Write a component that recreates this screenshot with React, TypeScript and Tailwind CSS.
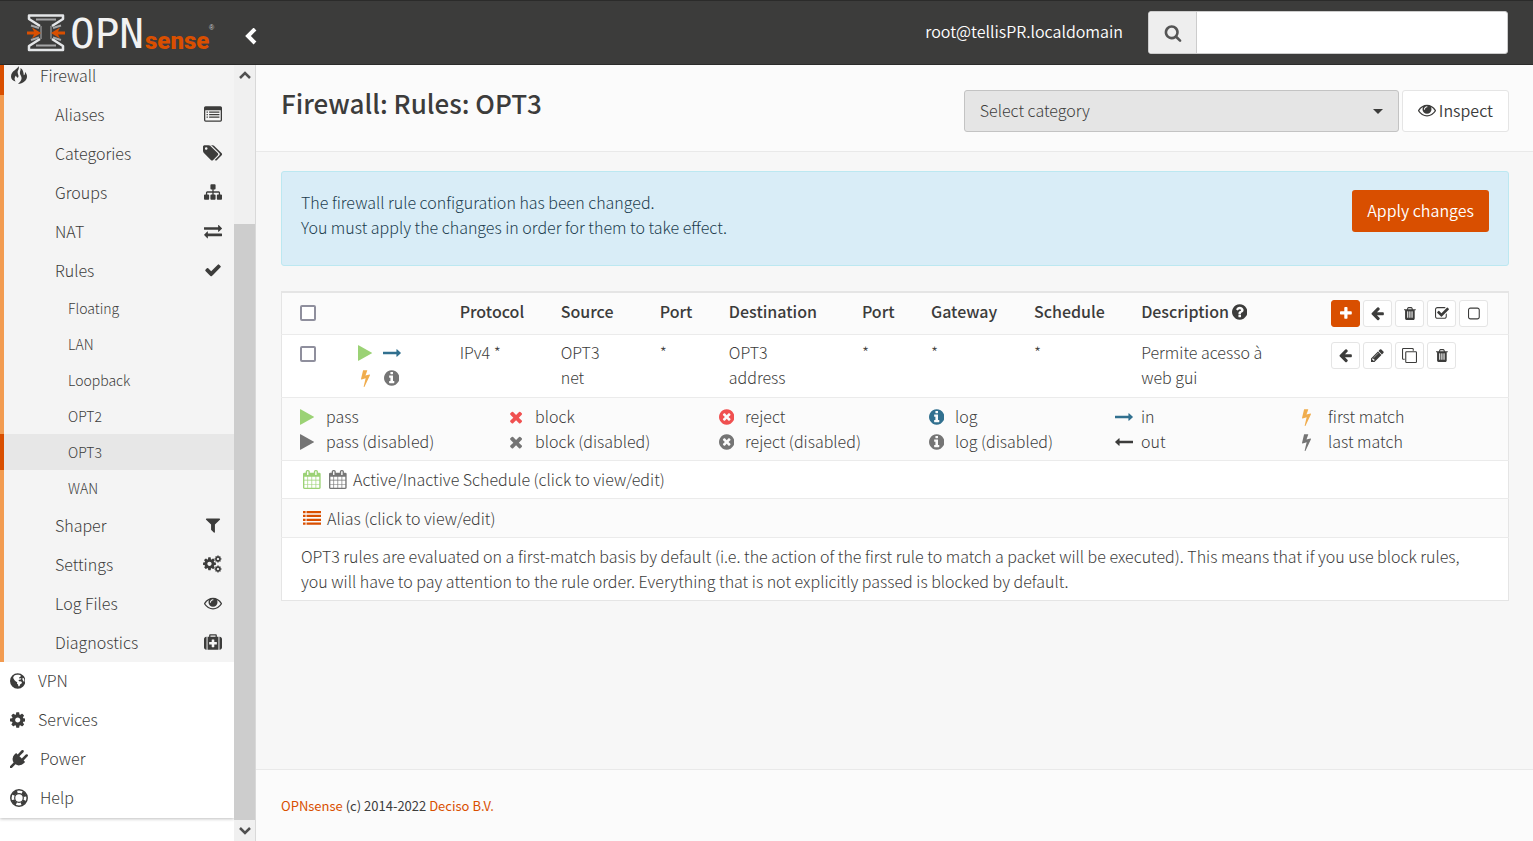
import type { ReactNode } from "react"
import clsx from "clsx"

const disc = "q0 209-103 385.5t-279.5 279.5-385.5 103-385.5-103-279.5-279.5-103-385.5 103-385.5 279.5-279.5 385.5-103 385.5 103 279.5 279.5 103 385.5z"
const cog = "M1152 896q0-106-75-181t-181-75-181 75-75 181 75 181 181 75 181-75 75-181zm512-109v222q0 12-8 23t-20 13l-185 28q-19 54-39 91 35 50 107 138 10 12 10 25t-9 23q-27 37-99 108t-94 71q-12 0-26-9l-138-108q-44 23-91 38-16 136-29 186-7 28-36 28h-222q-14 0-24.5-8.5t-11.5-21.5l-28-184q-49-16-90-37l-141 107q-10 9-25 9-14 0-25-11-126-114-165-168-7-10-7-23 0-12 8-23 15-21 51-66.5t54-70.5q-27-50-41-99l-183-27q-13-2-21-12.5t-8-23.5v-222q0-12 8-23t19-13l186-28q14-46 39-92-40-57-107-138-10-12-10-24 0-10 9-23 26-36 98.5-107.5t94.5-71.5q13 0 26 10l138 107q44-23 91-38 16-136 29-186 7-28 36-28h222q14 0 24.5 8.5t11.5 21.5l28 184q49 16 90 37l142-107q9-9 24-9 13 0 25 10 129 119 165 170 7 8 7 22 0 12-8 23-15 21-51 66.5t-54 70.5q26 50 41 98l183 28q13 2 21 12.5t8 23.5z"

// [viewBox, path]
const icons = {
  check: ["0 0 1792 1792", "M1671 566q0 40-28 68l-724 724-136 136q-28 28-68 28t-68-28l-136-136-362-362q-28-28-28-68t28-68l136-136q28-28 68-28t68 28l294 295 656-657q28-28 68-28t68 28l136 136q28 28 28 68z"],
  plus: ["192 0 1408 1792", "M1600 736v192q0 40-28 68t-68 28h-416v416q0 40-28 68t-68 28h-192q-40 0-68-28t-28-68v-416h-416q-40 0-68-28t-28-68v-192q0-40 28-68t68-28h416v-416q0-40 28-68t68-28h192q40 0 68 28t28 68v416h416q40 0 68 28t28 68z"],
  times: ["192 0 1408 1792", "M1490 1322q0 40-28 68l-136 136q-28 28-68 28t-68-28l-294-294-294 294q-28 28-68 28t-68-28l-136-136q-28-28-28-68t28-68l294-294-294-294q-28-28-28-68t28-68l136-136q28-28 68-28t68 28l294 294 294-294q28-28 68-28t68 28l136 136q28 28 28 68t-28 68l-294 294 294 294q28 28 28 68z"],
  timesCircle: ["128 0 1536 1792", "M1277 1122q0-26-19-45l-181-181 181-181q19-19 19-45 0-27-19-46l-90-90q-19-19-46-19-26 0-45 19l-181 181-181-181q-19-19-45-19-27 0-46 19l-90 90q-19 19-19 46 0 26 19 45l181 181-181 181q-19 19-19 45 0 27 19 46l90 90q19 19 46 19 26 0 45-19l181-181 181 181q19 19 45 19 27 0 46-19l90-90q19-19 19-46zm387-226" + disc],
  info: ["128 0 1536 1792", "M1152 1376v-160q0-14-9-23t-23-9h-96v-512q0-14-9-23t-23-9h-320q-14 0-23 9t-9 23v160q0 14 9 23t23 9h96v320h-96q-14 0-23 9t-9 23v160q0 14 9 23t23 9h448q14 0 23-9t9-23zm-128-896v-160q0-14-9-23t-23-9h-192q-14 0-23 9t-9 23v160q0 14 9 23t23 9h192q14 0 23-9t9-23zm640 416" + disc],
  question: ["128 0 1536 1792", "M1024 1376v-192q0-14-9-23t-23-9h-192q-14 0-23 9t-9 23v192q0 14 9 23t23 9h192q14 0 23-9t9-23zm256-672q0-88-55.5-163t-138.5-116-170-41q-243 0-371 213-15 24 8 42l132 100q7 6 19 6 16 0 25-12 53-68 86-92 34-24 86-24 48 0 85.5 26t37.5 59q0 38-20 61t-68 45q-63 28-115.5 86.5t-52.5 125.5v36q0 14 9 23t23 9h192q14 0 23-9t9-23q0-19 21.5-49.5t54.5-49.5q32-18 49-28.5t46-35 44.5-48 28-60.5 12.5-81zm384 192" + disc],
  trash: ["192 0 1408 1792", "M704 1376v-704q0-14-9-23t-23-9h-64q-14 0-23 9t-9 23v704q0 14 9 23t23 9h64q14 0 23-9t9-23zm256 0v-704q0-14-9-23t-23-9h-64q-14 0-23 9t-9 23v704q0 14 9 23t23 9h64q14 0 23-9t9-23zm256 0v-704q0-14-9-23t-23-9h-64q-14 0-23 9t-9 23v704q0 14 9 23t23 9h64q14 0 23-9t9-23zm-544-992h448l-48-117q-7-9-17-11h-317q-10 2-17 11zm928 32v64q0 14-9 23t-23 9h-96v948q0 83-47 143.5t-113 60.5h-832q-66 0-113-58.5t-47-141.5v-952h-96q-14 0-23-9t-9-23v-64q0-14 9-23t23-9h309l70-167q15-37 54-63t79-26h320q40 0 79 26t54 63l70 167h309q14 0 23 9t9 23z"],
  play: ["192 0 1408 1792", "M1576 927l-1328 738q-23 13-39.5 3t-16.5-36v-1472q0-26 16.5-36t39.5 3l1328 738q23 13 23 31t-23 31z"],
  filter: ["0 0 1792 1792", "M1595 295q17 41-14 70l-493 493v742q0 42-39 59-13 5-25 5-27 0-45-19l-256-256q-19-19-19-45v-486l-493-493q-31-29-14-70 17-39 59-39h1280q42 0 59 39z"],
  exchange: ["0 0 1792 1792", "M1792 1184v192q0 13-9.5 22.5t-22.5 9.5h-1376v192q0 13-9.5 22.5t-22.5 9.5q-12 0-24-10l-319-320q-9-9-9-22 0-14 9-23l320-320q9-9 23-9 13 0 22.5 9.5t9.5 22.5v192h1376q13 0 22.5 9.5t9.5 22.5zm0-544q0 14-9 23l-320 320q-9 9-23 9-13 0-22.5-9.5t-9.5-22.5v-192h-1376q-13 0-22.5-9.5t-9.5-22.5v-192q0-13 9.5-22.5t22.5-9.5h1376v-192q0-14 9-23t23-9q12 0 24 10l319 319q9 9 9 23z"],
  eye: ["0 0 1792 1792", "M1664 960q-152-236-381-353 61 104 61 225 0 185-131.5 316.5t-316.5 131.5-316.5-131.5-131.5-316.5q0-121 61-225-229 117-381 353 133 205 333.5 326.5t434.5 121.5 434.5-121.5 333.5-326.5zm-720-384q0-20-14-34t-34-14q-125 0-214.5 89.5t-89.5 214.5q0 20 14 34t34 14 34-14 14-34q0-86 61-147t147-61q20 0 34-14t14-34zm848 384q0 34-20 69-140 230-376.5 368.5t-499.5 138.5-499.5-139-376.5-368q-20-35-20-69t20-69q140-229 376.5-368t499.5-139 499.5 139 376.5 368q20 35 20 69z"],
  sitemap: ["0 0 1792 1792", "M1792 1248v320q0 40-28 68t-68 28h-320q-40 0-68-28t-28-68v-320q0-40 28-68t68-28h96v-192h-512v192h96q40 0 68 28t28 68v320q0 40-28 68t-68 28h-320q-40 0-68-28t-28-68v-320q0-40 28-68t68-28h96v-192h-512v192h96q40 0 68 28t28 68v320q0 40-28 68t-68 28h-320q-40 0-68-28t-28-68v-320q0-40 28-68t68-28h96v-192q0-52 38-90t90-38h512v-192h-96q-40 0-68-28t-28-68v-320q0-40 28-68t68-28h320q40 0 68 28t28 68v320q0 40-28 68t-68 28h-96v192h512q52 0 90 38t38 90v192h96q40 0 68 28t28 68z"],
  tags: ["-64 0 1920 1792", "M384 448q0-53-37.5-90.5t-90.5-37.5-90.5 37.5-37.5 90.5 37.5 90.5 90.5 37.5 90.5-37.5 37.5-90.5zm1067 576q0 53-37 90l-491 492q-39 37-91 37-53 0-90-37l-715-716q-38-37-64.5-101t-26.5-117v-416q0-52 38-90t90-38h416q53 0 117 26.5t102 64.5l715 714q37 39 37 91zm384 0q0 53-37 90l-491 492q-39 37-91 37-36 0-59-14t-53-45l470-470q37-37 37-90 0-52-37-91l-715-714q-38-38-102-64.5t-117-26.5h224q53 0 117 26.5t102 64.5l715 714q37 39 37 91z"],
  listAlt: ["0 0 1792 1792", "M160 128h1472q66 0 113 47t47 113v1216q0 66-47 113t-113 47h-1472q-66 0-113-47t-47-113v-1216q0-66 47-113t113-47zM128 512v992q0 32 32 32h1472q32 0 32-32v-992zM256 640h128v128h-128zM512 640h1024v128h-1024zM256 896h128v128h-128zM512 896h1024v128h-1024zM256 1152h128v128h-128zM512 1152h1024v128h-1024z"],
  medkit: ["0 0 1792 1792", "M1280 1120v-192q0-32-32-32h-224v-224q0-32-32-32h-192q-32 0-32 32v224h-224q-32 0-32 32v192q0 32 32 32h224v224q0 32 32 32h192q32 0 32-32v-224h224q32 0 32-32zM640 384h512v-128h-512zM256 384v1280h-32q-92 0-158-66t-66-158v-832q0-92 66-158t158-66zM1440 384v1280h-1088v-1280h160v-160q0-96 96-96h576q96 0 96 96v160zM1792 608v832q0 92-66 158t-158 66h-32v-1280h32q92 0 158 66t66 158z"],
  cog: ["128 0 1536 1792", cog],
  plug: ["0 0 1792 1792", "M1755 453q37 38 37 90.5t-37 90.5l-401 400 150 150-160 160q-163 163-389.5 186.5t-411.5-100.5l-362 362h-181v-181l362-362q-124-185-100.5-411.5t186.5-389.5l160-160 150 150 400-401q38-37 91-37t90 37 37 90.5-37 90.5l-400 401 234 234 401-400q38-37 91-37t90 37z"],
  globe: ["128 0 1536 1792", "M896 128a768 768 0 1 0 0 1536a768 768 0 1 0 0-1536zM1000 262q120 20 220 84l-70 50 60 74-130 40-60 100 120 30 60-50 60 80-110 90-120 10-60 110 150 60 90-20 110 110-60 140-110 60-80 180-110 20-30-180-110-110 30-130-130-60-140-140-120-190-10-100q40-110 150-190l110-30 110-20zM1380 560l120 60 60 180-20 220-80-120-90-140z"],
  calendar: ["64 0 1664 1792", "M192 1664h288v-288h-288v288zm352 0h320v-288h-320v288zm-352-352h288v-320h-288v320zm352 0h320v-320h-320v320zm-352-384h288v-288h-288v288zm736 736h320v-288h-320v288zm-384-736h320v-288h-320v288zm768 736h288v-288h-288v288zm-384-352h320v-320h-320v320zm-352-864v-288q0-13-9.5-22.5t-22.5-9.5h-64q-13 0-22.5 9.5t-9.5 22.5v288q0 13 9.5 22.5t22.5 9.5h64q13 0 22.5-9.5t9.5-22.5zm736 864h288v-320h-288v320zm-384-384h320v-288h-320v288zm384 0h288v-288h-288v288zm32-480v-288q0-13-9.5-22.5t-22.5-9.5h-64q-13 0-22.5 9.5t-9.5 22.5v288q0 13 9.5 22.5t22.5 9.5h64q13 0 22.5-9.5t9.5-22.5zm384-64v1280q0 52-38 90t-90 38h-1408q-52 0-90-38t-38-90v-1280q0-52 38-90t90-38h128v-96q0-66 47-113t113-47h64q66 0 113 47t47 113v96h384v-96q0-66 47-113t113-47h64q66 0 113 47t47 113v96h128q52 0 90 38t38 90z"],
  bolt: ["448 0 896 1792", "M1333 566q18 20 7 44l-540 1157q-13 25-42 25-4 0-14-2-17-5-25.5-19t-4.5-30l197-808-406 101q-4 1-12 1-18 0-31-11-18-15-13-39l201-825q4-16 16.5-26t29.5-10h328q19 0 32 12.5t13 29.5q0 8-5 18l-171 463 396-98q8-2 12-2 19 0 34 15z"],
  arrowLeft: ["0 32 1664 1792", "M1536 896v128q0 53-32.5 90.5t-84.5 37.5h-704l293 294q38 36 38 90t-38 90l-75 76q-37 37-90 37-52 0-91-37l-651-652q-37-37-37-90 0-52 37-91l651-650q38-38 91-38 52 0 90 38l75 74q38 38 38 91t-38 91l-293 293h704q52 0 84.5 37.5t32.5 90.5z"],
  pencil: ["128 0 1536 1792", "M491 1536l91-91-235-235-91 91v107h128v128h107zm523-928q0-22-22-22-10 0-17 7l-542 542q-7 7-7 17 0 22 22 22 10 0 17-7l542-542q7-7 7-17zm-54-192l416 416-832 832h-416v-416zm683 96q0 53-37 90l-166 166-416-416 166-165q36-38 90-38 53 0 91 38l235 234q37 39 37 91z"],
  search: ["0 0 1792 1792", "M1216 832q0-185-131.5-316.5t-316.5-131.5-316.5 131.5-131.5 316.5 131.5 316.5 316.5 131.5 316.5-131.5 131.5-316.5zm512 832q0 52-38 90t-90 38q-54 0-90-38l-343-342q-179 124-399 124-143 0-273.5-55.5t-225-150-150-225-55.5-273.5 55.5-273.5 150-225 225-150 273.5-55.5 273.5 55.5 225 150 150 225 55.5 273.5q0 220-124 399l343 343q37 37 37 90z"],
  checkSquare: ["64 0 1664 1792", "M1472 930v318q0 119-84.5 203.5t-203.5 84.5h-832q-119 0-203.5-84.5t-84.5-203.5v-832q0-119 84.5-203.5t203.5-84.5h832q63 0 117 25 15 7 18 23 3 17-9 29l-49 49q-10 10-23 10-3 0-9-2-23-6-45-6h-832q-66 0-113 47t-47 113v832q0 66 47 113t113 47h832q66 0 113-47t47-113v-254q0-13 9-22l64-64q10-10 23-10 6 0 12 3 20 8 20 29zm231-489l-814 814q-24 24-57 24t-57-24l-430-430q-24-24-24-57t24-57l110-110q24-24 57-24t57 24l263 263 647-647q24-24 57-24t57 24l110 110q24 24 24 57t-24 57z"],
  square: ["192 0 1408 1792", "M480 192h832q119 0 203.500 84.500t84.500 203.500v832q0 119-84.500 203.500t-203.500 84.500h-832q-119 0-203.500-84.500t-84.500-203.500v-832q0-119 84.500-203.500t203.500-84.500zM480 320q-160 0-160 160v832q0 160 160 160h832q160 0 160-160v-832q0-160-160-160z"],
  clone: ["0 0 1792 1792", "M1664 1632v-1088q0-32-32-32h-1088q-32 0-32 32v1088q0 32 32 32h1088q32 0 32-32zM1792 544v1088q0 160-160 160h-1088q-160 0-160-160v-1088q0-160 160-160h1088q160 0 160 160zM1408 160v160h-128v-160q0-32-32-32h-1088q-32 0-32 32v1088q0 32 32 32h160v128h-160q-160 0-160-160v-1088q0-160 160-160h1088q160 0 160 160z"],
  longRight: ["0 0 1792 1792", "M1784 893q0 14-10 24l-384 354q-16 14-35 6-19-9-19-29v-224h-1304q-14 0-23-9t-9-23v-192q0-14 9-23t23-9h1304v-224q0-21 19-29t35 5l384 350q10 10 10 23z"],
  longLeft: ["0 0 1792 1792", "M1792 800v192q0 14-9 23t-23 9h-1304v224q0 21-19 29t-35-5l-384-350q-10-10-10-23 0-14 10-24l384-354q16-14 35-6 19 9 19 29v224h1304q14 0 23 9t9 23z"],
  list: ["0 0 1792 1792", "M0 192h256v224h-256zM352 192h1440v224h-1440zM0 576h256v224h-256zM352 576h1440v224h-1440zM0 960h256v224h-256zM352 960h1440v224h-1440zM0 1344h256v224h-256zM352 1344h1440v224h-1440z"],
  fire: ["0 0 16 18", "M7.500 0C7.500 3 0 4.500 0 10.500C0 13 1.800 15 4.500 15.500C3 13 3.500 11 5 9.500C5.300 11 6 11.500 6.800 11.800C9 10 5.500 7 7 4.500C7.800 3.300 8.300 1.500 7.500 0ZM9.500 2C10 5 8 6 9.500 9C11 11.500 11.500 14 7 18C12 17.500 16 14.500 16 10.500C16 8.500 15 7 14 6C14.300 8 13.500 9 12.800 9.300C12.500 6 12 3.500 9.500 2Z"],
} as const

type IconName = keyof typeof icons

function Icon({ name, className = "h-[18px]" }: { name: IconName; className?: string }) {
  return (
    <svg viewBox={icons[name][0]} fill="currentColor" fillRule="evenodd" aria-hidden="true" className={clsx("w-auto shrink-0", className)}>
      <path d={icons[name][1]} />
    </svg>
  )
}

function Cogs() {
  return (
    <svg viewBox="0 0 1920 1792" fill="currentColor" fillRule="evenodd" aria-hidden="true" className="h-[18px] w-auto">
      <path d={cog} transform="translate(-100 130) scale(.83)" />
      <path d={cog} transform="translate(1090 -10) scale(.45)" />
      <path d={cog} transform="translate(1090 990) scale(.45)" />
    </svg>
  )
}

function LifeRing() {
  return (
    <svg viewBox="0 0 18 18" fill="none" stroke="currentColor" aria-hidden="true" className="h-[18px] w-auto">
      <circle cx="9" cy="9" r="8.200" strokeWidth="1.500" />
      <circle cx="9" cy="9" r="4.300" strokeWidth="1.200" />
      <circle cx="9" cy="9" r="6.300" strokeWidth="3.200" strokeDasharray="4.950 4.950" strokeDashoffset="-2.470" />
    </svg>
  )
}

function Logo() {
  return (
    <svg viewBox="0 0 190 42" width="190" height="42" role="img" aria-label="OPNsense">
      <g fill="none" stroke="#e4e6e8" strokeWidth="2.500" strokeLinejoin="round">
        <path d="M14 14L3 7V3.500H37V7L26 14" />
        <path d="M14 27L3 34V38H37V34L26 27" />
      </g>
      <g fill="none" stroke="#a5a6a7" strokeWidth="2">
        <path d="M10 7.500H30M10 33.500H30" />
        <path d="M5 13.500L13 16M35 13.500L27 16M5 28L13 25.500M35 28L27 25.500" />
        <path d="M15 14V27M25 14V27" stroke="#777" />
      </g>
      <path d="M1 19.500H8L6 15.500L15 21L6 26.500L8 22.500H1ZM39 19.500H32L34 15.500L25 21L34 26.500L32 22.500H39Z" fill="#d94f00" />
      <text x="44" y="36" fontSize="41" fill="#f2f2f2" className="font-['DejaVu_Sans_Mono',monospace] font-normal">OPN</text>
      <text x="119" y="37" fontSize="24" fill="#d94f00" className="font-['Roboto',sans-serif] font-black">sense</text>
      <text x="183" y="18" fontSize="7" fill="#ccc" className="font-['Liberation_Sans',sans-serif]">®</text>
    </svg>
  )
}

const firewallTop: [string, IconName][] = [
  ["Aliases", "listAlt"],
  ["Categories", "tags"],
  ["Groups", "sitemap"],
  ["NAT", "exchange"],
  ["Rules", "check"],
]

const interfaces = ["Floating", "LAN", "Loopback", "OPT2", "OPT3", "WAN"]

function MenuItem({ label, children }: { label: string; children: ReactNode }) {
  return (
    <a href="#" className="flex h-[39px] items-center justify-between border-l-4 border-[#f29b50] pr-2.5 pb-px pl-[51px]">
      {label}
      <span className="flex w-[22px] justify-center">{children}</span>
    </a>
  )
}

function RootItem({ label, children }: { label: string; children: ReactNode }) {
  return (
    <a href="#" className="flex h-[39px] items-center pb-0.5 pl-2.5">
      {children}
      {label}
    </a>
  )
}

function Sidebar() {
  return (
    <aside className="flex w-64 shrink-0 border-r border-[#d9d9d9] bg-white">
      <nav className="min-w-0 flex-1">
        <div className="shadow-[0_1px_3px_rgba(0,0,0,0.25)]">
          <div className="bg-[#f4f4f4]">
            <a href="#" className="flex h-[30px] items-center gap-[13px] border-l-4 border-[#d94f00] pb-2.5 pl-[7px]">
              <Icon name="fire" />
              Firewall
            </a>
            {firewallTop.map(([label, icon]) => (
              <MenuItem key={label} label={label}><Icon name={icon} /></MenuItem>
            ))}
            {interfaces.map((label) => (
              <a
                key={label}
                href="#"
                className={clsx(
                  "flex h-9 items-center border-l-4 pl-16 text-[14px]",
                  label === "OPT3" ? "border-[#d94f00] bg-[#e7e7e7]" : "border-[#f29b50]"
                )}
              >
                {label}
              </a>
            ))}
            <MenuItem label="Shaper"><Icon name="filter" /></MenuItem>
            <MenuItem label="Settings"><Cogs /></MenuItem>
            <MenuItem label="Log Files"><Icon name="eye" /></MenuItem>
            <MenuItem label="Diagnostics"><Icon name="medkit" /></MenuItem>
          </div>
          <RootItem label="VPN"><span className="w-7"><Icon name="globe" /></span></RootItem>
          <RootItem label="Services"><span className="w-7"><Icon name="cog" /></span></RootItem>
          <RootItem label="Power"><span className="w-[30px]"><Icon name="plug" /></span></RootItem>
          <RootItem label="Help"><span className="w-[30px]"><LifeRing /></span></RootItem>
        </div>
      </nav>
      <div className="flex w-[21px] flex-col bg-[#f0f0f0] text-[#505050]">
        <button aria-label="Scroll up" className="flex h-5 items-center justify-center">
          <svg width="12" height="8" viewBox="0 0 12 8" fill="none" stroke="currentColor" strokeWidth="2.500"><path d="M1 7L6 2L11 7" /></svg>
        </button>
        <div className="h-[139px]" />
        <div className="flex-1 bg-[#cdcdcd]" />
        <button aria-label="Scroll down" className="flex h-[21px] items-center justify-center">
          <svg width="12" height="8" viewBox="0 0 12 8" fill="none" stroke="currentColor" strokeWidth="2.500"><path d="M1 1L6 6L11 1" /></svg>
        </button>
      </div>
    </aside>
  )
}

function ActionButton({ icon, label, primary }: { icon: IconName; label: string; primary?: boolean }) {
  return (
    <button
      aria-label={label}
      className={clsx(
        "flex h-[27px] w-[29px] items-center justify-center rounded-[3px] border",
        primary ? "border-[#d94f00] bg-[#d94f00] text-white" : "border-[#e5e5e5] bg-white"
      )}
    >
      <Icon name={icon} className="h-[15px]" />
    </button>
  )
}

function Checkbox({ label }: { label: string }) {
  return <input type="checkbox" aria-label={label} className="block size-4 appearance-none rounded-[2px] border-2 border-[#8f8f9d] bg-white" />
}

type LegendLine = [IconName, string, string]

const legend: LegendLine[][] = [
  [["play", "text-[#9bd275]", "pass"], ["play", "text-[#757575]", "pass (disabled)"]],
  [["times", "text-[#f05050]", "block"], ["times", "text-[#757575]", "block (disabled)"]],
  [["timesCircle", "text-[#f05050]", "reject"], ["timesCircle", "text-[#757575]", "reject (disabled)"]],
  [["info", "text-[#31708f]", "log"], ["info", "text-[#757575]", "log (disabled)"]],
  [["longRight", "text-[#31708f]", "in"], ["longLeft", "text-[#3c3c3b]", "out"]],
  [["bolt", "text-[#f0ad4e]", "first match"], ["bolt", "text-[#757575]", "last match"]],
]

const columns = ["Protocol", "Source", "Port", "Destination", "Port", "Gateway", "Schedule"]
const rule = ["IPv4 *", "OPT3 net", "*", "OPT3 address", "*", "*", "*"]

function RulesTable() {
  return (
    <table className="w-full table-fixed border border-t-2 border-[#e5e5e5] bg-white text-left">
      <colgroup>
        <col className="w-[64px]" />
        <col className="w-[106px]" />
        <col className="w-[101px]" />
        <col className="w-[99px]" />
        <col className="w-[69px]" />
        <col className="w-[133px]" />
        <col className="w-[69px]" />
        <col className="w-[103px]" />
        <col className="w-[107px]" />
        <col className="w-[190px]" />
        <col className="w-[185px]" />
      </colgroup>
      <thead>
        <tr className="border-b border-[#ebebeb] bg-[#fbfbfb] align-top">
          <th className="pt-3 pl-[18px]"><Checkbox label="Select all rules" /></th>
          <th />
          {columns.map((name, i) => (
            <th key={i} className="px-2 pt-1.5 font-medium">{name}</th>
          ))}
          <th className="px-2 pt-1.5 font-medium">
            <span className="flex items-center gap-[3px]">Description<Icon name="question" /></span>
          </th>
          <th className="px-2 py-[7px]">
            <div className="flex gap-[3px]">
              <ActionButton icon="plus" label="Add rule" primary />
              <ActionButton icon="arrowLeft" label="Move selected rules to end" />
              <ActionButton icon="trash" label="Delete selected rules" />
              <ActionButton icon="checkSquare" label="Enable selected rules" />
              <ActionButton icon="square" label="Disable selected rules" />
            </div>
          </th>
        </tr>
      </thead>
      <tbody>
        <tr className="border-b border-[#ebebeb] align-top">
          <td className="pt-[11px] pl-[18px]"><Checkbox label="Select rule" /></td>
          <td className="pt-[5px] pl-[9px]">
            <div className="grid w-12 grid-cols-2 gap-x-1">
              <span className="flex h-[25px] items-center justify-center text-[#9bd275]"><Icon name="play" /></span>
              <span className="flex h-[25px] items-center justify-center text-[#31708f]"><Icon name="longRight" /></span>
              <span className="flex h-[25px] items-center justify-center text-[#f0ad4e]"><Icon name="bolt" /></span>
              <span className="flex h-[25px] items-center justify-center text-[#757575]"><Icon name="info" /></span>
            </div>
          </td>
          {rule.map((value, i) => (
            <td key={i} className="pt-[5px] pr-8 pb-[7px] pl-2">{value}</td>
          ))}
          <td className="pt-[5px] pr-8 pb-[7px] pl-2">Permite acesso à web gui</td>
          <td className="px-2 pt-[7px]">
            <div className="flex gap-[3px]">
              <ActionButton icon="arrowLeft" label="Move selected rules before this rule" />
              <ActionButton icon="pencil" label="Edit rule" />
              <ActionButton icon="clone" label="Clone rule" />
              <ActionButton icon="trash" label="Delete rule" />
            </div>
          </td>
        </tr>
        <tr className="border-b border-[#ebebeb] bg-[#fbfbfb]">
          <td colSpan={11} className="px-[18px] py-1.5">
            <div className="grid grid-cols-[209fr_210fr_210fr_186fr_187fr_188fr]">
              {legend.map((lines) => (
                <div key={lines[0][2]}>
                  {lines.map(([icon, color, label]) => (
                    <div key={label} className="flex items-center">
                      <span className={clsx("flex w-[26px] items-center", color)}><Icon name={icon} /></span>
                      {label}
                    </div>
                  ))}
                </div>
              ))}
            </div>
          </td>
        </tr>
        <tr className="h-[38px] border-b border-[#ebebeb]">
          <td colSpan={11} className="px-[19px]">
            <div className="flex items-center gap-1">
              <span className="flex w-[22px] justify-center text-[#9bd275]"><Icon name="calendar" className="h-[19px]" /></span>
              <span className="flex w-[22px] justify-center text-[#757575]"><Icon name="calendar" className="h-[19px]" /></span>
              Active/Inactive Schedule (click to view/edit)
            </div>
          </td>
        </tr>
        <tr className="h-[39px] border-b border-[#ebebeb] bg-[#fbfbfb]">
          <td colSpan={11} className="px-[19px]">
            <div className="flex items-center gap-1">
              <span className="flex w-[22px] justify-center text-[#d94f00]"><Icon name="list" /></span>
              Alias (click to view/edit)
            </div>
          </td>
        </tr>
        <tr>
          <td colSpan={11} className="py-1.5 pr-8 pl-[19px]">
            OPT3 rules are evaluated on a first-match basis by default (i.e. the action of the first rule to match a packet will be executed). This means that if you use block rules, you will have to pay attention to the rule order. Everything that is not explicitly passed is blocked by default.
          </td>
        </tr>
      </tbody>
    </table>
  )
}

export default function App() {
  return (
    <div className="flex min-h-screen flex-col bg-[#f7f7f7] font-['Noto_Sans_CJK_SC',sans-serif] text-[16px] leading-[25px] font-light text-[#3c3c3b]">
      <header className="flex h-[65px] items-center border-y border-[#2b2b2a] bg-[#3c3c3b] pr-[25px] pl-[26px] text-white">
        <a href="#"><Logo /></a>
        <button aria-label="Collapse menu" className="ml-7 mt-2">
          <svg width="14" height="18" viewBox="0 0 14 18" fill="none" stroke="currentColor" strokeWidth="4"><path d="M11 1L4 8L11 15" /></svg>
        </button>
        <span className="ml-auto pb-0.5 font-[350]">root@tellisPR.localdomain</span>
        <div className="ml-[25px] flex h-[43px] w-[360px] rounded-[3px] border border-[#ccc] bg-white">
          <label htmlFor="search" aria-label="Search" className="flex w-12 items-center justify-center rounded-l-[3px] border-r border-[#ccc] bg-[#eee] text-[#555]">
            <Icon name="search" />
          </label>
          <input id="search" type="text" className="min-w-0 flex-1 px-3 text-[#3c3c3b] outline-none" />
        </div>
      </header>
      <div className="flex flex-1">
        <Sidebar />
        <main className="flex min-w-0 flex-1 flex-col">
          <div className="flex h-[87px] items-start justify-between border-b border-[#e9e9e9] bg-[#fbfbfb] pt-[25px] pr-6 pl-[25px]">
            <h1 className="text-[26px] leading-[26px] font-medium">Firewall: Rules: OPT3</h1>
            <div className="flex gap-[3px]">
              <div className="relative">
                <select aria-label="Category" className="h-[42px] w-[435px] appearance-none rounded-[3px] border border-[#c3c3c3] bg-[#e5e5e5] px-[15px] pb-0.5">
                  <option>Select category</option>
                </select>
                <svg width="10" height="5" viewBox="0 0 10 5" fill="currentColor" className="pointer-events-none absolute top-[19px] right-4"><path d="M0 0H10L5 5Z" /></svg>
              </div>
              <button className="flex h-[42px] items-center gap-[3px] rounded-[3px] border border-[#e5e5e5] bg-white px-[15px] pb-0.5 font-[350]">
                <Icon name="eye" />
                Inspect
              </button>
            </div>
          </div>
          <div className="flex flex-col gap-[25px] pt-[19px] pr-6 pb-6 pl-[25px]">
            <div className="flex h-[95px] items-start justify-between rounded-[3px] border border-[#bce8f1] bg-[#d9edf7] px-[19px] pt-[18px] text-[#1c3d4f]">
              <p>
                The firewall rule configuration has been changed.
                <br />
                You must apply the changes in order for them to take effect.
              </p>
              <button className="h-[42px] rounded-[3px] bg-[#d94f00] px-[15px] pb-0.5 font-[350] text-white">Apply changes</button>
            </div>
            <RulesTable />
          </div>
          <footer className="mt-auto flex h-[72px] items-center border-t border-[#e9e9e9] bg-[#fbfbfb] px-[25px] text-[13px] font-normal">
            <p>
              <a href="#" className="text-[#d94f00]">OPNsense</a> (c) 2014-2022 <a href="#" className="text-[#d94f00]">Deciso B.V.</a>
            </p>
          </footer>
        </main>
      </div>
    </div>
  )
}
